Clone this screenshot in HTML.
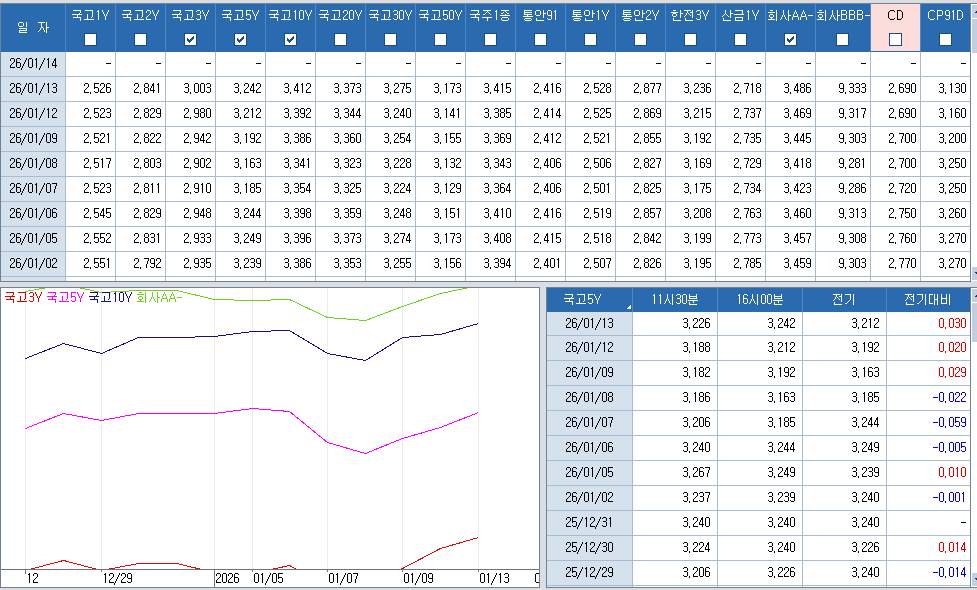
<!DOCTYPE html>
<html><head><meta charset="utf-8"><style>
html,body{margin:0;padding:0;}
body{width:977px;height:590px;position:relative;overflow:hidden;background:#dcdde1;font-family:"Liberation Sans",sans-serif;}
#r>div{position:absolute;}
.cb{position:absolute;width:11px;height:11px;border:1px solid #1c4a80;background:#fff;}
.ck{position:absolute;}
.lg{position:absolute;font-size:12px;line-height:14px;white-space:nowrap;}
.hg{position:absolute;font-size:12px;line-height:20px;white-space:nowrap;}
.h{position:absolute;width:120px;text-align:center;font-size:12px;line-height:14px;white-space:nowrap;}
#t{position:absolute;left:0;top:0;}
</style></head><body>
<div id="r">
<div style="left:0px;top:3px;width:977px;height:1px;background:#6f8398;"></div><div style="left:0px;top:3px;width:1px;height:279px;background:#6f8398;"></div><div style="left:0px;top:281px;width:971px;height:1px;background:#6f8398;"></div><div style="left:1px;top:4px;width:970px;height:48px;background:#2a6aae;"></div><div style="left:871px;top:4px;width:49px;height:47px;background:#fddcdc;"></div><div style="left:65px;top:4px;width:1px;height:48px;background:#5186c0;"></div><div style="left:115px;top:4px;width:1px;height:48px;background:#5186c0;"></div><div style="left:165px;top:4px;width:1px;height:48px;background:#5186c0;"></div><div style="left:215px;top:4px;width:1px;height:48px;background:#5186c0;"></div><div style="left:265px;top:4px;width:1px;height:48px;background:#5186c0;"></div><div style="left:315px;top:4px;width:1px;height:48px;background:#5186c0;"></div><div style="left:365px;top:4px;width:1px;height:48px;background:#5186c0;"></div><div style="left:415px;top:4px;width:1px;height:48px;background:#5186c0;"></div><div style="left:465px;top:4px;width:1px;height:48px;background:#5186c0;"></div><div style="left:515px;top:4px;width:1px;height:48px;background:#5186c0;"></div><div style="left:565px;top:4px;width:1px;height:48px;background:#5186c0;"></div><div style="left:615px;top:4px;width:1px;height:48px;background:#5186c0;"></div><div style="left:665px;top:4px;width:1px;height:48px;background:#5186c0;"></div><div style="left:715px;top:4px;width:1px;height:48px;background:#5186c0;"></div><div style="left:765px;top:4px;width:1px;height:48px;background:#5186c0;"></div><div style="left:815px;top:4px;width:1px;height:48px;background:#5186c0;"></div><div style="left:870px;top:4px;width:1px;height:48px;background:#5186c0;"></div><div style="left:920px;top:4px;width:1px;height:48px;background:#5186c0;"></div><div style="left:970px;top:4px;width:1px;height:278px;background:#6f8398;"></div><div style="left:1px;top:52px;width:64px;height:229px;background:#d5e1ec;"></div><div style="left:66px;top:52px;width:904px;height:229px;background:#ffffff;"></div><div style="left:1px;top:76px;width:969px;height:1px;background:#a8bcd0;"></div><div style="left:1px;top:101px;width:969px;height:1px;background:#a8bcd0;"></div><div style="left:1px;top:126px;width:969px;height:1px;background:#a8bcd0;"></div><div style="left:1px;top:151px;width:969px;height:1px;background:#a8bcd0;"></div><div style="left:1px;top:176px;width:969px;height:1px;background:#a8bcd0;"></div><div style="left:1px;top:201px;width:969px;height:1px;background:#a8bcd0;"></div><div style="left:1px;top:226px;width:969px;height:1px;background:#a8bcd0;"></div><div style="left:1px;top:251px;width:969px;height:1px;background:#a8bcd0;"></div><div style="left:1px;top:276px;width:969px;height:1px;background:#a8bcd0;"></div><div style="left:65px;top:52px;width:1px;height:229px;background:#a8bcd0;"></div><div style="left:115px;top:52px;width:1px;height:229px;background:#a8bcd0;"></div><div style="left:165px;top:52px;width:1px;height:229px;background:#a8bcd0;"></div><div style="left:215px;top:52px;width:1px;height:229px;background:#a8bcd0;"></div><div style="left:265px;top:52px;width:1px;height:229px;background:#a8bcd0;"></div><div style="left:315px;top:52px;width:1px;height:229px;background:#a8bcd0;"></div><div style="left:365px;top:52px;width:1px;height:229px;background:#a8bcd0;"></div><div style="left:415px;top:52px;width:1px;height:229px;background:#a8bcd0;"></div><div style="left:465px;top:52px;width:1px;height:229px;background:#a8bcd0;"></div><div style="left:515px;top:52px;width:1px;height:229px;background:#a8bcd0;"></div><div style="left:565px;top:52px;width:1px;height:229px;background:#a8bcd0;"></div><div style="left:615px;top:52px;width:1px;height:229px;background:#a8bcd0;"></div><div style="left:665px;top:52px;width:1px;height:229px;background:#a8bcd0;"></div><div style="left:715px;top:52px;width:1px;height:229px;background:#a8bcd0;"></div><div style="left:765px;top:52px;width:1px;height:229px;background:#a8bcd0;"></div><div style="left:815px;top:52px;width:1px;height:229px;background:#a8bcd0;"></div><div style="left:870px;top:52px;width:1px;height:229px;background:#a8bcd0;"></div><div style="left:920px;top:52px;width:1px;height:229px;background:#a8bcd0;"></div><div class="cb" style="left:84px;top:33px"></div><div class="cb" style="left:134px;top:33px"></div><div class="cb" style="left:184px;top:33px"></div><div style="left:187px;top:38px;width:1px;height:3px;background:#1c4a80;"></div><div style="left:188px;top:39px;width:1px;height:3px;background:#1c4a80;"></div><div style="left:189px;top:40px;width:1px;height:3px;background:#1c4a80;"></div><div style="left:190px;top:39px;width:1px;height:3px;background:#1c4a80;"></div><div style="left:191px;top:38px;width:1px;height:3px;background:#1c4a80;"></div><div style="left:192px;top:37px;width:1px;height:3px;background:#1c4a80;"></div><div style="left:193px;top:36px;width:1px;height:3px;background:#1c4a80;"></div><div class="cb" style="left:234px;top:33px"></div><div style="left:237px;top:38px;width:1px;height:3px;background:#1c4a80;"></div><div style="left:238px;top:39px;width:1px;height:3px;background:#1c4a80;"></div><div style="left:239px;top:40px;width:1px;height:3px;background:#1c4a80;"></div><div style="left:240px;top:39px;width:1px;height:3px;background:#1c4a80;"></div><div style="left:241px;top:38px;width:1px;height:3px;background:#1c4a80;"></div><div style="left:242px;top:37px;width:1px;height:3px;background:#1c4a80;"></div><div style="left:243px;top:36px;width:1px;height:3px;background:#1c4a80;"></div><div class="cb" style="left:284px;top:33px"></div><div style="left:287px;top:38px;width:1px;height:3px;background:#1c4a80;"></div><div style="left:288px;top:39px;width:1px;height:3px;background:#1c4a80;"></div><div style="left:289px;top:40px;width:1px;height:3px;background:#1c4a80;"></div><div style="left:290px;top:39px;width:1px;height:3px;background:#1c4a80;"></div><div style="left:291px;top:38px;width:1px;height:3px;background:#1c4a80;"></div><div style="left:292px;top:37px;width:1px;height:3px;background:#1c4a80;"></div><div style="left:293px;top:36px;width:1px;height:3px;background:#1c4a80;"></div><div class="cb" style="left:334px;top:33px"></div><div class="cb" style="left:384px;top:33px"></div><div class="cb" style="left:434px;top:33px"></div><div class="cb" style="left:484px;top:33px"></div><div class="cb" style="left:534px;top:33px"></div><div class="cb" style="left:584px;top:33px"></div><div class="cb" style="left:634px;top:33px"></div><div class="cb" style="left:684px;top:33px"></div><div class="cb" style="left:734px;top:33px"></div><div class="cb" style="left:784px;top:33px"></div><div style="left:787px;top:38px;width:1px;height:3px;background:#1c4a80;"></div><div style="left:788px;top:39px;width:1px;height:3px;background:#1c4a80;"></div><div style="left:789px;top:40px;width:1px;height:3px;background:#1c4a80;"></div><div style="left:790px;top:39px;width:1px;height:3px;background:#1c4a80;"></div><div style="left:791px;top:38px;width:1px;height:3px;background:#1c4a80;"></div><div style="left:792px;top:37px;width:1px;height:3px;background:#1c4a80;"></div><div style="left:793px;top:36px;width:1px;height:3px;background:#1c4a80;"></div><div class="cb" style="left:836px;top:33px"></div><div class="cb" style="left:889px;top:33px"></div><div class="cb" style="left:939px;top:33px"></div><div style="left:971px;top:4px;width:6px;height:277px;background:#ffffff;"></div><div style="left:972px;top:5px;width:5px;height:13px;background:#c3cfdc;"></div><div style="left:972px;top:19px;width:5px;height:34px;background:#c3cfdc;"></div><div style="left:972px;top:267px;width:5px;height:13px;background:#c3cfdc;"></div><div style="left:0px;top:287px;width:540px;height:301px;background:#6f8398;"></div><div style="left:1px;top:288px;width:538px;height:299px;background:#ffffff;"></div><div style="left:546px;top:287px;width:431px;height:301px;background:#6f8398;"></div><div style="left:547px;top:288px;width:423px;height:24px;background:#2a6aae;"></div><div style="left:547px;top:312px;width:85px;height:275px;background:#d5e1ec;"></div><div style="left:633px;top:312px;width:337px;height:275px;background:#ffffff;"></div><div style="left:632px;top:288px;width:1px;height:24px;background:#5186c0;"></div><div style="left:632px;top:312px;width:1px;height:275px;background:#a8bcd0;"></div><div style="left:717px;top:288px;width:1px;height:24px;background:#5186c0;"></div><div style="left:717px;top:312px;width:1px;height:275px;background:#a8bcd0;"></div><div style="left:802px;top:288px;width:1px;height:24px;background:#5186c0;"></div><div style="left:802px;top:312px;width:1px;height:275px;background:#a8bcd0;"></div><div style="left:886px;top:288px;width:1px;height:24px;background:#5186c0;"></div><div style="left:886px;top:312px;width:1px;height:275px;background:#a8bcd0;"></div><div style="left:547px;top:335px;width:423px;height:1px;background:#a8bcd0;"></div><div style="left:547px;top:360px;width:423px;height:1px;background:#a8bcd0;"></div><div style="left:547px;top:385px;width:423px;height:1px;background:#a8bcd0;"></div><div style="left:547px;top:410px;width:423px;height:1px;background:#a8bcd0;"></div><div style="left:547px;top:435px;width:423px;height:1px;background:#a8bcd0;"></div><div style="left:547px;top:460px;width:423px;height:1px;background:#a8bcd0;"></div><div style="left:547px;top:485px;width:423px;height:1px;background:#a8bcd0;"></div><div style="left:547px;top:510px;width:423px;height:1px;background:#a8bcd0;"></div><div style="left:547px;top:535px;width:423px;height:1px;background:#a8bcd0;"></div><div style="left:547px;top:560px;width:423px;height:1px;background:#a8bcd0;"></div><div style="left:547px;top:585px;width:423px;height:1px;background:#a8bcd0;"></div><div style="left:630px;top:305px;width:1px;height:1px;background:#ffffff;"></div><div style="left:629px;top:306px;width:2px;height:1px;background:#ffffff;"></div><div style="left:628px;top:307px;width:3px;height:1px;background:#ffffff;"></div><div style="left:627px;top:308px;width:4px;height:1px;background:#ffffff;"></div><div style="left:971px;top:288px;width:6px;height:299px;background:#ffffff;"></div><div style="left:972px;top:289px;width:5px;height:13px;background:#c3cfdc;"></div><div style="left:972px;top:303px;width:5px;height:39px;background:#c3cfdc;"></div><div style="left:972px;top:573px;width:5px;height:13px;background:#c3cfdc;"></div><div style="left:976px;top:11px;width:2px;height:1px;background:#26375a;"></div><div style="left:975px;top:12px;width:3px;height:1px;background:#26375a;"></div><div style="left:975px;top:272px;width:3px;height:1px;background:#26375a;"></div><div style="left:976px;top:273px;width:2px;height:1px;background:#26375a;"></div><div style="left:976px;top:295px;width:2px;height:1px;background:#26375a;"></div><div style="left:975px;top:296px;width:3px;height:1px;background:#26375a;"></div><div style="left:975px;top:578px;width:3px;height:1px;background:#26375a;"></div><div style="left:976px;top:579px;width:2px;height:1px;background:#26375a;"></div>
</div>
<svg id="t" width="977" height="590" viewBox="0 0 977 590" shape-rendering="crispEdges"><defs><path id="h0" d="M1 0h8v1h-8zM8 1h1v1h-1zM8 2h1v1h-1zM7 3h1v1h-1zM0 4h10v1h-10zM5 5h1v1h-1zM5 6h1v1h-1zM1 7h8v1h-8zM8 8h1v1h-1zM8 9h1v1h-1zM8 10h1v1h-1z"/><path id="h1" d="M1 0h8v1h-8zM8 1h1v1h-1zM8 2h1v1h-1zM8 3h1v1h-1zM3 4h1v1h-1zM8 4h1v1h-1zM3 5h1v1h-1zM8 5h1v1h-1zM3 6h1v1h-1zM8 6h1v1h-1zM3 7h1v1h-1zM7 7h1v1h-1zM3 8h1v1h-1zM0 9h10v1h-10z"/><path id="h2" d="M1 0h8v1h-8zM5 1h1v1h-1zM4 2h1v1h-1zM6 2h1v1h-1zM3 3h1v1h-1zM7 3h1v1h-1zM1 4h2v1h-2zM8 4h1v1h-1zM0 7h10v1h-10zM5 8h1v1h-1zM5 9h1v1h-1zM5 10h1v1h-1z"/><path id="h3" d="M1 0h8v1h-8zM5 1h1v1h-1zM3 2h1v1h-1zM6 2h1v1h-1zM1 3h2v1h-2zM7 3h2v1h-2zM5 4h1v1h-1zM0 5h10v1h-10zM2 7h6v1h-6zM1 8h1v1h-1zM8 8h1v1h-1zM1 9h1v1h-1zM8 9h1v1h-1zM2 10h6v1h-6z"/><path id="h4" d="M1 0h8v1h-8zM1 1h1v1h-1zM1 2h8v1h-8zM1 3h1v1h-1zM1 4h8v1h-8zM4 5h1v1h-1zM0 6h10v1h-10zM2 8h6v1h-6zM1 9h1v1h-1zM8 9h1v1h-1zM2 10h6v1h-6z"/><path id="h5" d="M1 0h4v1h-4zM8 0h1v1h-1zM0 1h1v1h-1zM5 1h1v1h-1zM8 1h1v1h-1zM0 2h1v1h-1zM5 2h1v1h-1zM8 2h1v1h-1zM0 3h1v1h-1zM5 3h1v1h-1zM8 3h3v1h-3zM0 4h1v1h-1zM5 4h1v1h-1zM8 4h1v1h-1zM1 5h4v1h-4zM8 5h1v1h-1zM8 6h1v1h-1zM8 7h1v1h-1zM1 8h1v1h-1zM1 9h1v1h-1zM1 10h8v1h-8z"/><path id="h6" d="M1 0h3v1h-3zM8 0h1v1h-1zM8 1h1v1h-1zM-1 2h7v1h-7zM8 2h1v1h-1zM1 3h3v1h-3zM8 3h3v1h-3zM0 4h1v1h-1zM4 4h1v1h-1zM8 4h1v1h-1zM0 5h1v1h-1zM4 5h1v1h-1zM8 5h1v1h-1zM1 6h3v1h-3zM8 6h1v1h-1zM8 7h1v1h-1zM1 8h1v1h-1zM1 9h1v1h-1zM1 10h8v1h-8z"/><path id="h7" d="M0 0h7v1h-7zM8 0h1v1h-1zM3 1h1v1h-1zM8 1h1v1h-1zM3 2h1v1h-1zM6 2h3v1h-3zM2 3h1v1h-1zM4 3h1v1h-1zM8 3h1v1h-1zM2 4h1v1h-1zM5 4h1v1h-1zM8 4h1v1h-1zM1 5h1v1h-1zM6 5h1v1h-1zM8 5h1v1h-1zM0 6h1v1h-1zM8 6h1v1h-1zM8 7h1v1h-1zM1 8h1v1h-1zM1 9h1v1h-1zM1 10h8v1h-8z"/><path id="h8" d="M3 0h1v1h-1zM8 0h1v1h-1zM3 1h1v1h-1zM8 1h1v1h-1zM3 2h1v1h-1zM8 2h1v1h-1zM3 3h1v1h-1zM8 3h3v1h-3zM2 4h1v1h-1zM4 4h1v1h-1zM8 4h1v1h-1zM1 5h1v1h-1zM5 5h1v1h-1zM8 5h1v1h-1zM0 6h1v1h-1zM6 6h1v1h-1zM8 6h1v1h-1zM8 7h1v1h-1zM1 8h1v1h-1zM1 9h1v1h-1zM1 10h8v1h-8z"/><path id="h9" d="M1 0h8v1h-8zM8 1h1v1h-1zM8 2h1v1h-1zM8 3h1v1h-1zM0 4h10v1h-10zM1 7h8v1h-8zM1 8h1v1h-1zM8 8h1v1h-1zM1 9h1v1h-1zM8 9h1v1h-1zM1 10h8v1h-8z"/><path id="h10" d="M2 0h3v1h-3zM8 0h1v1h-1zM8 1h1v1h-1zM0 2h7v1h-7zM8 2h1v1h-1zM8 3h1v1h-1zM2 4h3v1h-3zM8 4h1v1h-1zM1 5h1v1h-1zM5 5h1v1h-1zM8 5h1v1h-1zM1 6h1v1h-1zM5 6h1v1h-1zM8 6h1v1h-1zM2 7h3v1h-3zM8 7h1v1h-1zM3 8h1v1h-1zM8 8h1v1h-1zM0 9h7v1h-7zM8 9h1v1h-1zM8 10h1v1h-1z"/><path id="h11" d="M3 0h1v1h-1zM8 0h1v1h-1zM3 1h1v1h-1zM8 1h1v1h-1zM3 2h1v1h-1zM8 2h1v1h-1zM3 3h1v1h-1zM8 3h1v1h-1zM3 4h1v1h-1zM8 4h1v1h-1zM2 5h1v1h-1zM4 5h1v1h-1zM8 5h3v1h-3zM2 6h1v1h-1zM4 6h1v1h-1zM8 6h1v1h-1zM1 7h1v1h-1zM5 7h1v1h-1zM8 7h1v1h-1zM1 8h1v1h-1zM5 8h1v1h-1zM8 8h1v1h-1zM0 9h1v1h-1zM6 9h1v1h-1zM8 9h1v1h-1zM8 10h1v1h-1z"/><path id="h12" d="M4 0h1v1h-1zM9 0h1v1h-1zM4 1h1v1h-1zM9 1h1v1h-1zM4 2h1v1h-1zM9 2h1v1h-1zM4 3h1v1h-1zM9 3h1v1h-1zM4 4h1v1h-1zM9 4h1v1h-1zM3 5h1v1h-1zM5 5h1v1h-1zM9 5h1v1h-1zM3 6h1v1h-1zM5 6h1v1h-1zM9 6h1v1h-1zM2 7h1v1h-1zM6 7h1v1h-1zM9 7h1v1h-1zM2 8h1v1h-1zM6 8h1v1h-1zM9 8h1v1h-1zM1 9h1v1h-1zM7 9h1v1h-1zM9 9h1v1h-1zM9 10h1v1h-1z"/><path id="h13" d="M2 0h1v1h-1zM9 0h1v1h-1zM2 1h1v1h-1zM9 1h1v1h-1zM2 2h8v1h-8zM2 3h1v1h-1zM9 3h1v1h-1zM2 4h8v1h-8zM1 6h10v1h-10zM6 7h1v1h-1zM2 8h1v1h-1zM6 8h1v1h-1zM2 9h1v1h-1zM2 10h8v1h-8z"/><path id="h14" d="M0 0h6v1h-6zM8 0h1v1h-1zM5 1h1v1h-1zM8 1h1v1h-1zM5 2h1v1h-1zM8 2h1v1h-1zM5 3h1v1h-1zM8 3h1v1h-1zM5 4h1v1h-1zM8 4h1v1h-1zM5 5h1v1h-1zM8 5h1v1h-1zM4 6h1v1h-1zM8 6h1v1h-1zM3 7h1v1h-1zM8 7h1v1h-1zM2 8h1v1h-1zM8 8h1v1h-1zM0 9h2v1h-2zM8 9h1v1h-1zM8 10h1v1h-1z"/><path id="h15" d="M0 0h4v1h-4zM5 0h1v1h-1zM8 0h1v1h-1zM0 1h1v1h-1zM5 1h1v1h-1zM8 1h1v1h-1zM0 2h1v1h-1zM5 2h1v1h-1zM8 2h1v1h-1zM0 3h1v1h-1zM5 3h1v1h-1zM8 3h1v1h-1zM0 4h1v1h-1zM5 4h1v1h-1zM8 4h1v1h-1zM0 5h1v1h-1zM5 5h4v1h-4zM0 6h1v1h-1zM5 6h1v1h-1zM8 6h1v1h-1zM0 7h1v1h-1zM5 7h1v1h-1zM8 7h1v1h-1zM0 8h1v1h-1zM5 8h1v1h-1zM8 8h1v1h-1zM0 9h4v1h-4zM5 9h1v1h-1zM8 9h1v1h-1zM5 10h1v1h-1zM8 10h1v1h-1z"/><path id="h16" d="M0 0h1v1h-1zM5 0h1v1h-1zM8 0h1v1h-1zM0 1h1v1h-1zM5 1h1v1h-1zM8 1h1v1h-1zM0 2h1v1h-1zM5 2h1v1h-1zM8 2h1v1h-1zM0 3h1v1h-1zM5 3h1v1h-1zM8 3h1v1h-1zM0 4h6v1h-6zM8 4h1v1h-1zM0 5h1v1h-1zM5 5h1v1h-1zM8 5h1v1h-1zM0 6h1v1h-1zM5 6h1v1h-1zM8 6h1v1h-1zM0 7h1v1h-1zM5 7h1v1h-1zM8 7h1v1h-1zM0 8h1v1h-1zM5 8h1v1h-1zM8 8h1v1h-1zM0 9h6v1h-6zM8 9h1v1h-1zM8 10h1v1h-1z"/><path id="h17" d="M1 0h4v1h-4zM8 0h1v1h-1zM0 1h1v1h-1zM5 1h1v1h-1zM8 1h1v1h-1zM0 2h1v1h-1zM5 2h1v1h-1zM8 2h1v1h-1zM0 3h1v1h-1zM5 3h1v1h-1zM8 3h1v1h-1zM1 4h4v1h-4zM8 4h1v1h-1zM1 6h8v1h-8zM8 7h1v1h-1zM1 8h8v1h-8zM1 9h1v1h-1zM1 10h8v1h-8z"/><path id="h18" d="M0 0h7v1h-7zM8 0h1v1h-1zM3 1h1v1h-1zM8 1h1v1h-1zM3 2h1v1h-1zM8 2h1v1h-1zM3 3h1v1h-1zM8 3h1v1h-1zM3 4h1v1h-1zM8 4h1v1h-1zM3 5h2v1h-2zM8 5h3v1h-3zM2 6h1v1h-1zM5 6h1v1h-1zM8 6h1v1h-1zM2 7h1v1h-1zM5 7h1v1h-1zM8 7h1v1h-1zM1 8h1v1h-1zM6 8h1v1h-1zM8 8h1v1h-1zM0 9h1v1h-1zM6 9h1v1h-1zM8 9h1v1h-1zM8 10h1v1h-1z"/><path id="gA" d="M3 0h1v1h-1zM3 1h1v1h-1zM2 2h1v1h-1zM4 2h1v1h-1zM2 3h1v1h-1zM4 3h1v1h-1zM1 4h1v1h-1zM5 4h1v1h-1zM1 5h1v1h-1zM5 5h1v1h-1zM1 6h5v1h-5zM0 7h1v1h-1zM6 7h1v1h-1zM0 8h1v1h-1zM6 8h1v1h-1zM0 9h1v1h-1zM6 9h1v1h-1z"/><path id="gB" d="M0 0h5v1h-5zM0 1h1v1h-1zM5 1h1v1h-1zM0 2h1v1h-1zM5 2h1v1h-1zM0 3h1v1h-1zM5 3h1v1h-1zM0 4h5v1h-5zM0 5h1v1h-1zM5 5h1v1h-1zM0 6h1v1h-1zM5 6h1v1h-1zM0 7h1v1h-1zM5 7h1v1h-1zM0 8h1v1h-1zM5 8h1v1h-1zM0 9h5v1h-5z"/><path id="gC" d="M3 0h4v1h-4zM2 1h1v1h-1zM7 1h1v1h-1zM1 2h1v1h-1zM1 3h1v1h-1zM1 4h1v1h-1zM1 5h1v1h-1zM1 6h1v1h-1zM1 7h1v1h-1zM2 8h1v1h-1zM7 8h1v1h-1zM3 9h4v1h-4z"/><path id="gD" d="M0 0h4v1h-4zM0 1h1v1h-1zM4 1h1v1h-1zM0 2h1v1h-1zM5 2h1v1h-1zM0 3h1v1h-1zM5 3h1v1h-1zM0 4h1v1h-1zM5 4h1v1h-1zM0 5h1v1h-1zM5 5h1v1h-1zM0 6h1v1h-1zM5 6h1v1h-1zM0 7h1v1h-1zM5 7h1v1h-1zM0 8h1v1h-1zM4 8h1v1h-1zM0 9h4v1h-4z"/><path id="gP" d="M0 0h5v1h-5zM0 1h1v1h-1zM5 1h1v1h-1zM0 2h1v1h-1zM5 2h1v1h-1zM0 3h1v1h-1zM5 3h1v1h-1zM0 4h1v1h-1zM5 4h1v1h-1zM0 5h5v1h-5zM0 6h1v1h-1zM0 7h1v1h-1zM0 8h1v1h-1zM0 9h1v1h-1z"/><path id="gY" d="M0 0h1v1h-1zM6 0h1v1h-1zM0 1h1v1h-1zM6 1h1v1h-1zM1 2h1v1h-1zM5 2h1v1h-1zM1 3h1v1h-1zM5 3h1v1h-1zM2 4h1v1h-1zM4 4h1v1h-1zM2 5h1v1h-1zM4 5h1v1h-1zM3 6h1v1h-1zM3 7h1v1h-1zM3 8h1v1h-1zM3 9h1v1h-1z"/><path id="g0" d="M1 0h3v1h-3zM0 1h1v1h-1zM4 1h1v1h-1zM0 2h1v1h-1zM4 2h1v1h-1zM0 3h1v1h-1zM4 3h1v1h-1zM0 4h1v1h-1zM4 4h1v1h-1zM0 5h1v1h-1zM4 5h1v1h-1zM0 6h1v1h-1zM4 6h1v1h-1zM0 7h1v1h-1zM4 7h1v1h-1zM0 8h1v1h-1zM4 8h1v1h-1zM1 9h3v1h-3z"/><path id="g1" d="M2 0h1v1h-1zM1 1h2v1h-2zM2 2h1v1h-1zM2 3h1v1h-1zM2 4h1v1h-1zM2 5h1v1h-1zM2 6h1v1h-1zM2 7h1v1h-1zM2 8h1v1h-1zM2 9h1v1h-1z"/><path id="g2" d="M1 0h3v1h-3zM0 1h1v1h-1zM4 1h1v1h-1zM0 2h1v1h-1zM4 2h1v1h-1zM4 3h1v1h-1zM3 4h1v1h-1zM2 5h1v1h-1zM1 6h1v1h-1zM0 7h1v1h-1zM0 8h1v1h-1zM0 9h5v1h-5z"/><path id="g3" d="M1 0h3v1h-3zM0 1h1v1h-1zM4 1h1v1h-1zM4 2h1v1h-1zM4 3h1v1h-1zM1 4h3v1h-3zM4 5h1v1h-1zM4 6h1v1h-1zM4 7h1v1h-1zM0 8h1v1h-1zM4 8h1v1h-1zM1 9h3v1h-3z"/><path id="g4" d="M3 0h1v1h-1zM2 1h2v1h-2zM2 2h2v1h-2zM1 3h1v1h-1zM3 3h1v1h-1zM1 4h1v1h-1zM3 4h1v1h-1zM0 5h1v1h-1zM3 5h1v1h-1zM0 6h1v1h-1zM3 6h1v1h-1zM0 7h5v1h-5zM3 8h1v1h-1zM3 9h1v1h-1z"/><path id="g5" d="M0 0h5v1h-5zM0 1h1v1h-1zM0 2h1v1h-1zM0 3h1v1h-1zM0 4h4v1h-4zM0 5h1v1h-1zM4 5h1v1h-1zM4 6h1v1h-1zM4 7h1v1h-1zM0 8h1v1h-1zM4 8h1v1h-1zM1 9h3v1h-3z"/><path id="g6" d="M1 0h3v1h-3zM0 1h1v1h-1zM4 1h1v1h-1zM0 2h1v1h-1zM0 3h1v1h-1zM0 4h4v1h-4zM0 5h1v1h-1zM4 5h1v1h-1zM0 6h1v1h-1zM4 6h1v1h-1zM0 7h1v1h-1zM4 7h1v1h-1zM0 8h1v1h-1zM4 8h1v1h-1zM1 9h3v1h-3z"/><path id="g7" d="M0 0h5v1h-5zM4 1h1v1h-1zM4 2h1v1h-1zM3 3h1v1h-1zM3 4h1v1h-1zM3 5h1v1h-1zM2 6h1v1h-1zM2 7h1v1h-1zM2 8h1v1h-1zM2 9h1v1h-1z"/><path id="g8" d="M1 0h3v1h-3zM0 1h1v1h-1zM4 1h1v1h-1zM0 2h1v1h-1zM4 2h1v1h-1zM0 3h1v1h-1zM4 3h1v1h-1zM1 4h3v1h-3zM0 5h1v1h-1zM4 5h1v1h-1zM0 6h1v1h-1zM4 6h1v1h-1zM0 7h1v1h-1zM4 7h1v1h-1zM0 8h1v1h-1zM4 8h1v1h-1zM1 9h3v1h-3z"/><path id="g9" d="M1 0h3v1h-3zM0 1h1v1h-1zM4 1h1v1h-1zM0 2h1v1h-1zM4 2h1v1h-1zM0 3h1v1h-1zM4 3h1v1h-1zM0 4h1v1h-1zM4 4h1v1h-1zM1 5h4v1h-4zM4 6h1v1h-1zM4 7h1v1h-1zM0 8h1v1h-1zM4 8h1v1h-1zM1 9h3v1h-3z"/><path id="gc" d="M0 9h1v1h-1zM0 10h1v1h-1z"/><path id="gm" d="M0 5h5v1h-5z"/><path id="gs" d="M4 0h1v1h-1zM4 1h1v1h-1zM3 2h1v1h-1zM3 3h1v1h-1zM2 4h1v1h-1zM2 5h1v1h-1zM1 6h1v1h-1zM1 7h1v1h-1zM0 8h1v1h-1zM0 9h1v1h-1zM-1 10h1v1h-1zM-1 11h1v1h-1z"/><clipPath id="pc"><rect x="1" y="288" width="538" height="281"/></clipPath><clipPath id="cc"><rect x="0" y="0" width="539" height="590"/></clipPath></defs><rect x="25" y="288" width="1" height="281" fill="#ececec"/><rect x="101" y="288" width="1" height="281" fill="#ececec"/><rect x="214" y="288" width="1" height="281" fill="#ececec"/><rect x="252" y="288" width="1" height="281" fill="#ececec"/><rect x="327" y="288" width="1" height="281" fill="#ececec"/><rect x="402" y="288" width="1" height="281" fill="#ececec"/><rect x="478" y="288" width="1" height="281" fill="#ececec"/><g clip-path="url(#pc)"><polyline points="25.5,428.5 63.5,413.5 101.5,420.5 138.5,413.5 176.5,413.5 214.5,413.5 252.5,408.5 289.5,411.5 327.5,442.5 365.5,453.5 402.5,438.5 440.5,427.5 478.5,412.5" fill="none" stroke="#ff00ff" stroke-width="1"/><polyline points="25.5,358.5 63.5,343.5 101.5,353.5 138.5,337.5 176.5,337.5 214.5,336.5 252.5,331.5 289.5,330.5 327.5,353.5 365.5,360.5 402.5,337.5 440.5,334.5 478.5,323.5" fill="none" stroke="#10107e" stroke-width="1"/><polyline points="25.5,291.5 63.5,284.5 101.5,292.5 138.5,290.5 176.5,290.5 214.5,299.5 252.5,300.5 289.5,299.5 327.5,317.5 365.5,320.5 402.5,306.5 440.5,293.5 478.5,285.5" fill="none" stroke="#6ed21e" stroke-width="1"/><polyline points="25.5,570.5 63.5,560.5 101.5,570.5 138.5,563.5 176.5,563.5 214.5,572.5 252.5,573.5 289.5,565.5 327.5,585.5 365.5,589.5 402.5,568.5 440.5,548.5 478.5,537.5" fill="none" stroke="#dc0a0a" stroke-width="1"/></g><rect x="1" y="569" width="538" height="1" fill="#707274"/><rect x="214" y="569" width="1" height="18" fill="#707274"/><rect x="25" y="570" width="1" height="4" fill="#707274"/><rect x="101" y="570" width="1" height="2" fill="#707274"/><rect x="252" y="570" width="1" height="2" fill="#707274"/><rect x="327" y="570" width="1" height="2" fill="#707274"/><rect x="402" y="570" width="1" height="2" fill="#707274"/><rect x="478" y="570" width="1" height="2" fill="#707274"/><use href="#h17" x="18" y="22" fill="#fff"/><use href="#h18" x="38" y="22" fill="#fff"/><use href="#h0" x="72" y="10" fill="#fff"/><use href="#h1" x="84" y="10" fill="#fff"/><use href="#g1" x="96" y="10" fill="#fff"/><use href="#gY" x="102" y="10" fill="#fff"/><use href="#h0" x="122" y="10" fill="#fff"/><use href="#h1" x="134" y="10" fill="#fff"/><use href="#g2" x="146" y="10" fill="#fff"/><use href="#gY" x="152" y="10" fill="#fff"/><use href="#h0" x="172" y="10" fill="#fff"/><use href="#h1" x="184" y="10" fill="#fff"/><use href="#g3" x="196" y="10" fill="#fff"/><use href="#gY" x="202" y="10" fill="#fff"/><use href="#h0" x="222" y="10" fill="#fff"/><use href="#h1" x="234" y="10" fill="#fff"/><use href="#g5" x="246" y="10" fill="#fff"/><use href="#gY" x="252" y="10" fill="#fff"/><use href="#h0" x="269" y="10" fill="#fff"/><use href="#h1" x="281" y="10" fill="#fff"/><use href="#g1" x="293" y="10" fill="#fff"/><use href="#g0" x="299" y="10" fill="#fff"/><use href="#gY" x="305" y="10" fill="#fff"/><use href="#h0" x="319" y="10" fill="#fff"/><use href="#h1" x="331" y="10" fill="#fff"/><use href="#g2" x="343" y="10" fill="#fff"/><use href="#g0" x="349" y="10" fill="#fff"/><use href="#gY" x="355" y="10" fill="#fff"/><use href="#h0" x="369" y="10" fill="#fff"/><use href="#h1" x="381" y="10" fill="#fff"/><use href="#g3" x="393" y="10" fill="#fff"/><use href="#g0" x="399" y="10" fill="#fff"/><use href="#gY" x="405" y="10" fill="#fff"/><use href="#h0" x="419" y="10" fill="#fff"/><use href="#h1" x="431" y="10" fill="#fff"/><use href="#g5" x="443" y="10" fill="#fff"/><use href="#g0" x="449" y="10" fill="#fff"/><use href="#gY" x="455" y="10" fill="#fff"/><use href="#h0" x="470" y="10" fill="#fff"/><use href="#h2" x="482" y="10" fill="#fff"/><use href="#g1" x="494" y="10" fill="#fff"/><use href="#h3" x="500" y="10" fill="#fff"/><use href="#h4" x="523" y="10" fill="#fff"/><use href="#h5" x="535" y="10" fill="#fff"/><use href="#g9" x="547" y="10" fill="#fff"/><use href="#g1" x="553" y="10" fill="#fff"/><use href="#h4" x="572" y="10" fill="#fff"/><use href="#h5" x="584" y="10" fill="#fff"/><use href="#g1" x="596" y="10" fill="#fff"/><use href="#gY" x="602" y="10" fill="#fff"/><use href="#h4" x="622" y="10" fill="#fff"/><use href="#h5" x="634" y="10" fill="#fff"/><use href="#g2" x="646" y="10" fill="#fff"/><use href="#gY" x="652" y="10" fill="#fff"/><use href="#h6" x="672" y="10" fill="#fff"/><use href="#h7" x="684" y="10" fill="#fff"/><use href="#g3" x="696" y="10" fill="#fff"/><use href="#gY" x="702" y="10" fill="#fff"/><use href="#h8" x="722" y="10" fill="#fff"/><use href="#h9" x="734" y="10" fill="#fff"/><use href="#g1" x="746" y="10" fill="#fff"/><use href="#gY" x="752" y="10" fill="#fff"/><use href="#h10" x="768" y="10" fill="#fff"/><use href="#h11" x="780" y="10" fill="#fff"/><use href="#gA" x="792" y="10" fill="#fff"/><use href="#gA" x="800" y="10" fill="#fff"/><use href="#gm" x="808" y="10" fill="#fff"/><use href="#h10" x="817" y="10" fill="#fff"/><use href="#h11" x="829" y="10" fill="#fff"/><use href="#gB" x="841" y="10" fill="#fff"/><use href="#gB" x="849" y="10" fill="#fff"/><use href="#gB" x="857" y="10" fill="#fff"/><use href="#gm" x="865" y="10" fill="#fff"/><use href="#gC" x="887" y="10" fill="#000"/><use href="#gD" x="897" y="10" fill="#000"/><use href="#gC" x="927" y="10" fill="#fff"/><use href="#gP" x="937" y="10" fill="#fff"/><use href="#g9" x="945" y="10" fill="#fff"/><use href="#g1" x="951" y="10" fill="#fff"/><use href="#gD" x="957" y="10" fill="#fff"/><use href="#g2" x="10" y="58"/><use href="#g6" x="16" y="58"/><use href="#gs" x="22" y="58"/><use href="#g0" x="28" y="58"/><use href="#g1" x="34" y="58"/><use href="#gs" x="40" y="58"/><use href="#g1" x="46" y="58"/><use href="#g4" x="52" y="58"/><use href="#gm" x="106" y="58"/><use href="#gm" x="156" y="58"/><use href="#gm" x="206" y="58"/><use href="#gm" x="256" y="58"/><use href="#gm" x="306" y="58"/><use href="#gm" x="356" y="58"/><use href="#gm" x="406" y="58"/><use href="#gm" x="456" y="58"/><use href="#gm" x="506" y="58"/><use href="#gm" x="556" y="58"/><use href="#gm" x="606" y="58"/><use href="#gm" x="656" y="58"/><use href="#gm" x="706" y="58"/><use href="#gm" x="756" y="58"/><use href="#gm" x="806" y="58"/><use href="#gm" x="861" y="58"/><use href="#gm" x="911" y="58"/><use href="#gm" x="961" y="58"/><use href="#g2" x="10" y="83"/><use href="#g6" x="16" y="83"/><use href="#gs" x="22" y="83"/><use href="#g0" x="28" y="83"/><use href="#g1" x="34" y="83"/><use href="#gs" x="40" y="83"/><use href="#g1" x="46" y="83"/><use href="#g3" x="52" y="83"/><use href="#g2" x="84" y="83"/><use href="#gc" x="90" y="83"/><use href="#g5" x="94" y="83"/><use href="#g2" x="100" y="83"/><use href="#g6" x="106" y="83"/><use href="#g2" x="134" y="83"/><use href="#gc" x="140" y="83"/><use href="#g8" x="144" y="83"/><use href="#g4" x="150" y="83"/><use href="#g1" x="156" y="83"/><use href="#g3" x="184" y="83"/><use href="#gc" x="190" y="83"/><use href="#g0" x="194" y="83"/><use href="#g0" x="200" y="83"/><use href="#g3" x="206" y="83"/><use href="#g3" x="234" y="83"/><use href="#gc" x="240" y="83"/><use href="#g2" x="244" y="83"/><use href="#g4" x="250" y="83"/><use href="#g2" x="256" y="83"/><use href="#g3" x="284" y="83"/><use href="#gc" x="290" y="83"/><use href="#g4" x="294" y="83"/><use href="#g1" x="300" y="83"/><use href="#g2" x="306" y="83"/><use href="#g3" x="334" y="83"/><use href="#gc" x="340" y="83"/><use href="#g3" x="344" y="83"/><use href="#g7" x="350" y="83"/><use href="#g3" x="356" y="83"/><use href="#g3" x="384" y="83"/><use href="#gc" x="390" y="83"/><use href="#g2" x="394" y="83"/><use href="#g7" x="400" y="83"/><use href="#g5" x="406" y="83"/><use href="#g3" x="434" y="83"/><use href="#gc" x="440" y="83"/><use href="#g1" x="444" y="83"/><use href="#g7" x="450" y="83"/><use href="#g3" x="456" y="83"/><use href="#g3" x="484" y="83"/><use href="#gc" x="490" y="83"/><use href="#g4" x="494" y="83"/><use href="#g1" x="500" y="83"/><use href="#g5" x="506" y="83"/><use href="#g2" x="534" y="83"/><use href="#gc" x="540" y="83"/><use href="#g4" x="544" y="83"/><use href="#g1" x="550" y="83"/><use href="#g6" x="556" y="83"/><use href="#g2" x="584" y="83"/><use href="#gc" x="590" y="83"/><use href="#g5" x="594" y="83"/><use href="#g2" x="600" y="83"/><use href="#g8" x="606" y="83"/><use href="#g2" x="634" y="83"/><use href="#gc" x="640" y="83"/><use href="#g8" x="644" y="83"/><use href="#g7" x="650" y="83"/><use href="#g7" x="656" y="83"/><use href="#g3" x="684" y="83"/><use href="#gc" x="690" y="83"/><use href="#g2" x="694" y="83"/><use href="#g3" x="700" y="83"/><use href="#g6" x="706" y="83"/><use href="#g2" x="734" y="83"/><use href="#gc" x="740" y="83"/><use href="#g7" x="744" y="83"/><use href="#g1" x="750" y="83"/><use href="#g8" x="756" y="83"/><use href="#g3" x="784" y="83"/><use href="#gc" x="790" y="83"/><use href="#g4" x="794" y="83"/><use href="#g8" x="800" y="83"/><use href="#g6" x="806" y="83"/><use href="#g9" x="839" y="83"/><use href="#gc" x="845" y="83"/><use href="#g3" x="849" y="83"/><use href="#g3" x="855" y="83"/><use href="#g3" x="861" y="83"/><use href="#g2" x="889" y="83"/><use href="#gc" x="895" y="83"/><use href="#g6" x="899" y="83"/><use href="#g9" x="905" y="83"/><use href="#g0" x="911" y="83"/><use href="#g3" x="939" y="83"/><use href="#gc" x="945" y="83"/><use href="#g1" x="949" y="83"/><use href="#g3" x="955" y="83"/><use href="#g0" x="961" y="83"/><use href="#g2" x="10" y="108"/><use href="#g6" x="16" y="108"/><use href="#gs" x="22" y="108"/><use href="#g0" x="28" y="108"/><use href="#g1" x="34" y="108"/><use href="#gs" x="40" y="108"/><use href="#g1" x="46" y="108"/><use href="#g2" x="52" y="108"/><use href="#g2" x="84" y="108"/><use href="#gc" x="90" y="108"/><use href="#g5" x="94" y="108"/><use href="#g2" x="100" y="108"/><use href="#g3" x="106" y="108"/><use href="#g2" x="134" y="108"/><use href="#gc" x="140" y="108"/><use href="#g8" x="144" y="108"/><use href="#g2" x="150" y="108"/><use href="#g9" x="156" y="108"/><use href="#g2" x="184" y="108"/><use href="#gc" x="190" y="108"/><use href="#g9" x="194" y="108"/><use href="#g8" x="200" y="108"/><use href="#g0" x="206" y="108"/><use href="#g3" x="234" y="108"/><use href="#gc" x="240" y="108"/><use href="#g2" x="244" y="108"/><use href="#g1" x="250" y="108"/><use href="#g2" x="256" y="108"/><use href="#g3" x="284" y="108"/><use href="#gc" x="290" y="108"/><use href="#g3" x="294" y="108"/><use href="#g9" x="300" y="108"/><use href="#g2" x="306" y="108"/><use href="#g3" x="334" y="108"/><use href="#gc" x="340" y="108"/><use href="#g3" x="344" y="108"/><use href="#g4" x="350" y="108"/><use href="#g4" x="356" y="108"/><use href="#g3" x="384" y="108"/><use href="#gc" x="390" y="108"/><use href="#g2" x="394" y="108"/><use href="#g4" x="400" y="108"/><use href="#g0" x="406" y="108"/><use href="#g3" x="434" y="108"/><use href="#gc" x="440" y="108"/><use href="#g1" x="444" y="108"/><use href="#g4" x="450" y="108"/><use href="#g1" x="456" y="108"/><use href="#g3" x="484" y="108"/><use href="#gc" x="490" y="108"/><use href="#g3" x="494" y="108"/><use href="#g8" x="500" y="108"/><use href="#g5" x="506" y="108"/><use href="#g2" x="534" y="108"/><use href="#gc" x="540" y="108"/><use href="#g4" x="544" y="108"/><use href="#g1" x="550" y="108"/><use href="#g4" x="556" y="108"/><use href="#g2" x="584" y="108"/><use href="#gc" x="590" y="108"/><use href="#g5" x="594" y="108"/><use href="#g2" x="600" y="108"/><use href="#g5" x="606" y="108"/><use href="#g2" x="634" y="108"/><use href="#gc" x="640" y="108"/><use href="#g8" x="644" y="108"/><use href="#g6" x="650" y="108"/><use href="#g9" x="656" y="108"/><use href="#g3" x="684" y="108"/><use href="#gc" x="690" y="108"/><use href="#g2" x="694" y="108"/><use href="#g1" x="700" y="108"/><use href="#g5" x="706" y="108"/><use href="#g2" x="734" y="108"/><use href="#gc" x="740" y="108"/><use href="#g7" x="744" y="108"/><use href="#g3" x="750" y="108"/><use href="#g7" x="756" y="108"/><use href="#g3" x="784" y="108"/><use href="#gc" x="790" y="108"/><use href="#g4" x="794" y="108"/><use href="#g6" x="800" y="108"/><use href="#g9" x="806" y="108"/><use href="#g9" x="839" y="108"/><use href="#gc" x="845" y="108"/><use href="#g3" x="849" y="108"/><use href="#g1" x="855" y="108"/><use href="#g7" x="861" y="108"/><use href="#g2" x="889" y="108"/><use href="#gc" x="895" y="108"/><use href="#g6" x="899" y="108"/><use href="#g9" x="905" y="108"/><use href="#g0" x="911" y="108"/><use href="#g3" x="939" y="108"/><use href="#gc" x="945" y="108"/><use href="#g1" x="949" y="108"/><use href="#g6" x="955" y="108"/><use href="#g0" x="961" y="108"/><use href="#g2" x="10" y="133"/><use href="#g6" x="16" y="133"/><use href="#gs" x="22" y="133"/><use href="#g0" x="28" y="133"/><use href="#g1" x="34" y="133"/><use href="#gs" x="40" y="133"/><use href="#g0" x="46" y="133"/><use href="#g9" x="52" y="133"/><use href="#g2" x="84" y="133"/><use href="#gc" x="90" y="133"/><use href="#g5" x="94" y="133"/><use href="#g2" x="100" y="133"/><use href="#g1" x="106" y="133"/><use href="#g2" x="134" y="133"/><use href="#gc" x="140" y="133"/><use href="#g8" x="144" y="133"/><use href="#g2" x="150" y="133"/><use href="#g2" x="156" y="133"/><use href="#g2" x="184" y="133"/><use href="#gc" x="190" y="133"/><use href="#g9" x="194" y="133"/><use href="#g4" x="200" y="133"/><use href="#g2" x="206" y="133"/><use href="#g3" x="234" y="133"/><use href="#gc" x="240" y="133"/><use href="#g1" x="244" y="133"/><use href="#g9" x="250" y="133"/><use href="#g2" x="256" y="133"/><use href="#g3" x="284" y="133"/><use href="#gc" x="290" y="133"/><use href="#g3" x="294" y="133"/><use href="#g8" x="300" y="133"/><use href="#g6" x="306" y="133"/><use href="#g3" x="334" y="133"/><use href="#gc" x="340" y="133"/><use href="#g3" x="344" y="133"/><use href="#g6" x="350" y="133"/><use href="#g0" x="356" y="133"/><use href="#g3" x="384" y="133"/><use href="#gc" x="390" y="133"/><use href="#g2" x="394" y="133"/><use href="#g5" x="400" y="133"/><use href="#g4" x="406" y="133"/><use href="#g3" x="434" y="133"/><use href="#gc" x="440" y="133"/><use href="#g1" x="444" y="133"/><use href="#g5" x="450" y="133"/><use href="#g5" x="456" y="133"/><use href="#g3" x="484" y="133"/><use href="#gc" x="490" y="133"/><use href="#g3" x="494" y="133"/><use href="#g6" x="500" y="133"/><use href="#g9" x="506" y="133"/><use href="#g2" x="534" y="133"/><use href="#gc" x="540" y="133"/><use href="#g4" x="544" y="133"/><use href="#g1" x="550" y="133"/><use href="#g2" x="556" y="133"/><use href="#g2" x="584" y="133"/><use href="#gc" x="590" y="133"/><use href="#g5" x="594" y="133"/><use href="#g2" x="600" y="133"/><use href="#g1" x="606" y="133"/><use href="#g2" x="634" y="133"/><use href="#gc" x="640" y="133"/><use href="#g8" x="644" y="133"/><use href="#g5" x="650" y="133"/><use href="#g5" x="656" y="133"/><use href="#g3" x="684" y="133"/><use href="#gc" x="690" y="133"/><use href="#g1" x="694" y="133"/><use href="#g9" x="700" y="133"/><use href="#g2" x="706" y="133"/><use href="#g2" x="734" y="133"/><use href="#gc" x="740" y="133"/><use href="#g7" x="744" y="133"/><use href="#g3" x="750" y="133"/><use href="#g5" x="756" y="133"/><use href="#g3" x="784" y="133"/><use href="#gc" x="790" y="133"/><use href="#g4" x="794" y="133"/><use href="#g4" x="800" y="133"/><use href="#g5" x="806" y="133"/><use href="#g9" x="839" y="133"/><use href="#gc" x="845" y="133"/><use href="#g3" x="849" y="133"/><use href="#g0" x="855" y="133"/><use href="#g3" x="861" y="133"/><use href="#g2" x="889" y="133"/><use href="#gc" x="895" y="133"/><use href="#g7" x="899" y="133"/><use href="#g0" x="905" y="133"/><use href="#g0" x="911" y="133"/><use href="#g3" x="939" y="133"/><use href="#gc" x="945" y="133"/><use href="#g2" x="949" y="133"/><use href="#g0" x="955" y="133"/><use href="#g0" x="961" y="133"/><use href="#g2" x="10" y="158"/><use href="#g6" x="16" y="158"/><use href="#gs" x="22" y="158"/><use href="#g0" x="28" y="158"/><use href="#g1" x="34" y="158"/><use href="#gs" x="40" y="158"/><use href="#g0" x="46" y="158"/><use href="#g8" x="52" y="158"/><use href="#g2" x="84" y="158"/><use href="#gc" x="90" y="158"/><use href="#g5" x="94" y="158"/><use href="#g1" x="100" y="158"/><use href="#g7" x="106" y="158"/><use href="#g2" x="134" y="158"/><use href="#gc" x="140" y="158"/><use href="#g8" x="144" y="158"/><use href="#g0" x="150" y="158"/><use href="#g3" x="156" y="158"/><use href="#g2" x="184" y="158"/><use href="#gc" x="190" y="158"/><use href="#g9" x="194" y="158"/><use href="#g0" x="200" y="158"/><use href="#g2" x="206" y="158"/><use href="#g3" x="234" y="158"/><use href="#gc" x="240" y="158"/><use href="#g1" x="244" y="158"/><use href="#g6" x="250" y="158"/><use href="#g3" x="256" y="158"/><use href="#g3" x="284" y="158"/><use href="#gc" x="290" y="158"/><use href="#g3" x="294" y="158"/><use href="#g4" x="300" y="158"/><use href="#g1" x="306" y="158"/><use href="#g3" x="334" y="158"/><use href="#gc" x="340" y="158"/><use href="#g3" x="344" y="158"/><use href="#g2" x="350" y="158"/><use href="#g3" x="356" y="158"/><use href="#g3" x="384" y="158"/><use href="#gc" x="390" y="158"/><use href="#g2" x="394" y="158"/><use href="#g2" x="400" y="158"/><use href="#g8" x="406" y="158"/><use href="#g3" x="434" y="158"/><use href="#gc" x="440" y="158"/><use href="#g1" x="444" y="158"/><use href="#g3" x="450" y="158"/><use href="#g2" x="456" y="158"/><use href="#g3" x="484" y="158"/><use href="#gc" x="490" y="158"/><use href="#g3" x="494" y="158"/><use href="#g4" x="500" y="158"/><use href="#g3" x="506" y="158"/><use href="#g2" x="534" y="158"/><use href="#gc" x="540" y="158"/><use href="#g4" x="544" y="158"/><use href="#g0" x="550" y="158"/><use href="#g6" x="556" y="158"/><use href="#g2" x="584" y="158"/><use href="#gc" x="590" y="158"/><use href="#g5" x="594" y="158"/><use href="#g0" x="600" y="158"/><use href="#g6" x="606" y="158"/><use href="#g2" x="634" y="158"/><use href="#gc" x="640" y="158"/><use href="#g8" x="644" y="158"/><use href="#g2" x="650" y="158"/><use href="#g7" x="656" y="158"/><use href="#g3" x="684" y="158"/><use href="#gc" x="690" y="158"/><use href="#g1" x="694" y="158"/><use href="#g6" x="700" y="158"/><use href="#g9" x="706" y="158"/><use href="#g2" x="734" y="158"/><use href="#gc" x="740" y="158"/><use href="#g7" x="744" y="158"/><use href="#g2" x="750" y="158"/><use href="#g9" x="756" y="158"/><use href="#g3" x="784" y="158"/><use href="#gc" x="790" y="158"/><use href="#g4" x="794" y="158"/><use href="#g1" x="800" y="158"/><use href="#g8" x="806" y="158"/><use href="#g9" x="839" y="158"/><use href="#gc" x="845" y="158"/><use href="#g2" x="849" y="158"/><use href="#g8" x="855" y="158"/><use href="#g1" x="861" y="158"/><use href="#g2" x="889" y="158"/><use href="#gc" x="895" y="158"/><use href="#g7" x="899" y="158"/><use href="#g0" x="905" y="158"/><use href="#g0" x="911" y="158"/><use href="#g3" x="939" y="158"/><use href="#gc" x="945" y="158"/><use href="#g2" x="949" y="158"/><use href="#g5" x="955" y="158"/><use href="#g0" x="961" y="158"/><use href="#g2" x="10" y="183"/><use href="#g6" x="16" y="183"/><use href="#gs" x="22" y="183"/><use href="#g0" x="28" y="183"/><use href="#g1" x="34" y="183"/><use href="#gs" x="40" y="183"/><use href="#g0" x="46" y="183"/><use href="#g7" x="52" y="183"/><use href="#g2" x="84" y="183"/><use href="#gc" x="90" y="183"/><use href="#g5" x="94" y="183"/><use href="#g2" x="100" y="183"/><use href="#g3" x="106" y="183"/><use href="#g2" x="134" y="183"/><use href="#gc" x="140" y="183"/><use href="#g8" x="144" y="183"/><use href="#g1" x="150" y="183"/><use href="#g1" x="156" y="183"/><use href="#g2" x="184" y="183"/><use href="#gc" x="190" y="183"/><use href="#g9" x="194" y="183"/><use href="#g1" x="200" y="183"/><use href="#g0" x="206" y="183"/><use href="#g3" x="234" y="183"/><use href="#gc" x="240" y="183"/><use href="#g1" x="244" y="183"/><use href="#g8" x="250" y="183"/><use href="#g5" x="256" y="183"/><use href="#g3" x="284" y="183"/><use href="#gc" x="290" y="183"/><use href="#g3" x="294" y="183"/><use href="#g5" x="300" y="183"/><use href="#g4" x="306" y="183"/><use href="#g3" x="334" y="183"/><use href="#gc" x="340" y="183"/><use href="#g3" x="344" y="183"/><use href="#g2" x="350" y="183"/><use href="#g5" x="356" y="183"/><use href="#g3" x="384" y="183"/><use href="#gc" x="390" y="183"/><use href="#g2" x="394" y="183"/><use href="#g2" x="400" y="183"/><use href="#g4" x="406" y="183"/><use href="#g3" x="434" y="183"/><use href="#gc" x="440" y="183"/><use href="#g1" x="444" y="183"/><use href="#g2" x="450" y="183"/><use href="#g9" x="456" y="183"/><use href="#g3" x="484" y="183"/><use href="#gc" x="490" y="183"/><use href="#g3" x="494" y="183"/><use href="#g6" x="500" y="183"/><use href="#g4" x="506" y="183"/><use href="#g2" x="534" y="183"/><use href="#gc" x="540" y="183"/><use href="#g4" x="544" y="183"/><use href="#g0" x="550" y="183"/><use href="#g6" x="556" y="183"/><use href="#g2" x="584" y="183"/><use href="#gc" x="590" y="183"/><use href="#g5" x="594" y="183"/><use href="#g0" x="600" y="183"/><use href="#g1" x="606" y="183"/><use href="#g2" x="634" y="183"/><use href="#gc" x="640" y="183"/><use href="#g8" x="644" y="183"/><use href="#g2" x="650" y="183"/><use href="#g5" x="656" y="183"/><use href="#g3" x="684" y="183"/><use href="#gc" x="690" y="183"/><use href="#g1" x="694" y="183"/><use href="#g7" x="700" y="183"/><use href="#g5" x="706" y="183"/><use href="#g2" x="734" y="183"/><use href="#gc" x="740" y="183"/><use href="#g7" x="744" y="183"/><use href="#g3" x="750" y="183"/><use href="#g4" x="756" y="183"/><use href="#g3" x="784" y="183"/><use href="#gc" x="790" y="183"/><use href="#g4" x="794" y="183"/><use href="#g2" x="800" y="183"/><use href="#g3" x="806" y="183"/><use href="#g9" x="839" y="183"/><use href="#gc" x="845" y="183"/><use href="#g2" x="849" y="183"/><use href="#g8" x="855" y="183"/><use href="#g6" x="861" y="183"/><use href="#g2" x="889" y="183"/><use href="#gc" x="895" y="183"/><use href="#g7" x="899" y="183"/><use href="#g2" x="905" y="183"/><use href="#g0" x="911" y="183"/><use href="#g3" x="939" y="183"/><use href="#gc" x="945" y="183"/><use href="#g2" x="949" y="183"/><use href="#g5" x="955" y="183"/><use href="#g0" x="961" y="183"/><use href="#g2" x="10" y="208"/><use href="#g6" x="16" y="208"/><use href="#gs" x="22" y="208"/><use href="#g0" x="28" y="208"/><use href="#g1" x="34" y="208"/><use href="#gs" x="40" y="208"/><use href="#g0" x="46" y="208"/><use href="#g6" x="52" y="208"/><use href="#g2" x="84" y="208"/><use href="#gc" x="90" y="208"/><use href="#g5" x="94" y="208"/><use href="#g4" x="100" y="208"/><use href="#g5" x="106" y="208"/><use href="#g2" x="134" y="208"/><use href="#gc" x="140" y="208"/><use href="#g8" x="144" y="208"/><use href="#g2" x="150" y="208"/><use href="#g9" x="156" y="208"/><use href="#g2" x="184" y="208"/><use href="#gc" x="190" y="208"/><use href="#g9" x="194" y="208"/><use href="#g4" x="200" y="208"/><use href="#g8" x="206" y="208"/><use href="#g3" x="234" y="208"/><use href="#gc" x="240" y="208"/><use href="#g2" x="244" y="208"/><use href="#g4" x="250" y="208"/><use href="#g4" x="256" y="208"/><use href="#g3" x="284" y="208"/><use href="#gc" x="290" y="208"/><use href="#g3" x="294" y="208"/><use href="#g9" x="300" y="208"/><use href="#g8" x="306" y="208"/><use href="#g3" x="334" y="208"/><use href="#gc" x="340" y="208"/><use href="#g3" x="344" y="208"/><use href="#g5" x="350" y="208"/><use href="#g9" x="356" y="208"/><use href="#g3" x="384" y="208"/><use href="#gc" x="390" y="208"/><use href="#g2" x="394" y="208"/><use href="#g4" x="400" y="208"/><use href="#g8" x="406" y="208"/><use href="#g3" x="434" y="208"/><use href="#gc" x="440" y="208"/><use href="#g1" x="444" y="208"/><use href="#g5" x="450" y="208"/><use href="#g1" x="456" y="208"/><use href="#g3" x="484" y="208"/><use href="#gc" x="490" y="208"/><use href="#g4" x="494" y="208"/><use href="#g1" x="500" y="208"/><use href="#g0" x="506" y="208"/><use href="#g2" x="534" y="208"/><use href="#gc" x="540" y="208"/><use href="#g4" x="544" y="208"/><use href="#g1" x="550" y="208"/><use href="#g6" x="556" y="208"/><use href="#g2" x="584" y="208"/><use href="#gc" x="590" y="208"/><use href="#g5" x="594" y="208"/><use href="#g1" x="600" y="208"/><use href="#g9" x="606" y="208"/><use href="#g2" x="634" y="208"/><use href="#gc" x="640" y="208"/><use href="#g8" x="644" y="208"/><use href="#g5" x="650" y="208"/><use href="#g7" x="656" y="208"/><use href="#g3" x="684" y="208"/><use href="#gc" x="690" y="208"/><use href="#g2" x="694" y="208"/><use href="#g0" x="700" y="208"/><use href="#g8" x="706" y="208"/><use href="#g2" x="734" y="208"/><use href="#gc" x="740" y="208"/><use href="#g7" x="744" y="208"/><use href="#g6" x="750" y="208"/><use href="#g3" x="756" y="208"/><use href="#g3" x="784" y="208"/><use href="#gc" x="790" y="208"/><use href="#g4" x="794" y="208"/><use href="#g6" x="800" y="208"/><use href="#g0" x="806" y="208"/><use href="#g9" x="839" y="208"/><use href="#gc" x="845" y="208"/><use href="#g3" x="849" y="208"/><use href="#g1" x="855" y="208"/><use href="#g3" x="861" y="208"/><use href="#g2" x="889" y="208"/><use href="#gc" x="895" y="208"/><use href="#g7" x="899" y="208"/><use href="#g5" x="905" y="208"/><use href="#g0" x="911" y="208"/><use href="#g3" x="939" y="208"/><use href="#gc" x="945" y="208"/><use href="#g2" x="949" y="208"/><use href="#g6" x="955" y="208"/><use href="#g0" x="961" y="208"/><use href="#g2" x="10" y="233"/><use href="#g6" x="16" y="233"/><use href="#gs" x="22" y="233"/><use href="#g0" x="28" y="233"/><use href="#g1" x="34" y="233"/><use href="#gs" x="40" y="233"/><use href="#g0" x="46" y="233"/><use href="#g5" x="52" y="233"/><use href="#g2" x="84" y="233"/><use href="#gc" x="90" y="233"/><use href="#g5" x="94" y="233"/><use href="#g5" x="100" y="233"/><use href="#g2" x="106" y="233"/><use href="#g2" x="134" y="233"/><use href="#gc" x="140" y="233"/><use href="#g8" x="144" y="233"/><use href="#g3" x="150" y="233"/><use href="#g1" x="156" y="233"/><use href="#g2" x="184" y="233"/><use href="#gc" x="190" y="233"/><use href="#g9" x="194" y="233"/><use href="#g3" x="200" y="233"/><use href="#g3" x="206" y="233"/><use href="#g3" x="234" y="233"/><use href="#gc" x="240" y="233"/><use href="#g2" x="244" y="233"/><use href="#g4" x="250" y="233"/><use href="#g9" x="256" y="233"/><use href="#g3" x="284" y="233"/><use href="#gc" x="290" y="233"/><use href="#g3" x="294" y="233"/><use href="#g9" x="300" y="233"/><use href="#g6" x="306" y="233"/><use href="#g3" x="334" y="233"/><use href="#gc" x="340" y="233"/><use href="#g3" x="344" y="233"/><use href="#g7" x="350" y="233"/><use href="#g3" x="356" y="233"/><use href="#g3" x="384" y="233"/><use href="#gc" x="390" y="233"/><use href="#g2" x="394" y="233"/><use href="#g7" x="400" y="233"/><use href="#g4" x="406" y="233"/><use href="#g3" x="434" y="233"/><use href="#gc" x="440" y="233"/><use href="#g1" x="444" y="233"/><use href="#g7" x="450" y="233"/><use href="#g3" x="456" y="233"/><use href="#g3" x="484" y="233"/><use href="#gc" x="490" y="233"/><use href="#g4" x="494" y="233"/><use href="#g0" x="500" y="233"/><use href="#g8" x="506" y="233"/><use href="#g2" x="534" y="233"/><use href="#gc" x="540" y="233"/><use href="#g4" x="544" y="233"/><use href="#g1" x="550" y="233"/><use href="#g5" x="556" y="233"/><use href="#g2" x="584" y="233"/><use href="#gc" x="590" y="233"/><use href="#g5" x="594" y="233"/><use href="#g1" x="600" y="233"/><use href="#g8" x="606" y="233"/><use href="#g2" x="634" y="233"/><use href="#gc" x="640" y="233"/><use href="#g8" x="644" y="233"/><use href="#g4" x="650" y="233"/><use href="#g2" x="656" y="233"/><use href="#g3" x="684" y="233"/><use href="#gc" x="690" y="233"/><use href="#g1" x="694" y="233"/><use href="#g9" x="700" y="233"/><use href="#g9" x="706" y="233"/><use href="#g2" x="734" y="233"/><use href="#gc" x="740" y="233"/><use href="#g7" x="744" y="233"/><use href="#g7" x="750" y="233"/><use href="#g3" x="756" y="233"/><use href="#g3" x="784" y="233"/><use href="#gc" x="790" y="233"/><use href="#g4" x="794" y="233"/><use href="#g5" x="800" y="233"/><use href="#g7" x="806" y="233"/><use href="#g9" x="839" y="233"/><use href="#gc" x="845" y="233"/><use href="#g3" x="849" y="233"/><use href="#g0" x="855" y="233"/><use href="#g8" x="861" y="233"/><use href="#g2" x="889" y="233"/><use href="#gc" x="895" y="233"/><use href="#g7" x="899" y="233"/><use href="#g6" x="905" y="233"/><use href="#g0" x="911" y="233"/><use href="#g3" x="939" y="233"/><use href="#gc" x="945" y="233"/><use href="#g2" x="949" y="233"/><use href="#g7" x="955" y="233"/><use href="#g0" x="961" y="233"/><use href="#g2" x="10" y="258"/><use href="#g6" x="16" y="258"/><use href="#gs" x="22" y="258"/><use href="#g0" x="28" y="258"/><use href="#g1" x="34" y="258"/><use href="#gs" x="40" y="258"/><use href="#g0" x="46" y="258"/><use href="#g2" x="52" y="258"/><use href="#g2" x="84" y="258"/><use href="#gc" x="90" y="258"/><use href="#g5" x="94" y="258"/><use href="#g5" x="100" y="258"/><use href="#g1" x="106" y="258"/><use href="#g2" x="134" y="258"/><use href="#gc" x="140" y="258"/><use href="#g7" x="144" y="258"/><use href="#g9" x="150" y="258"/><use href="#g2" x="156" y="258"/><use href="#g2" x="184" y="258"/><use href="#gc" x="190" y="258"/><use href="#g9" x="194" y="258"/><use href="#g3" x="200" y="258"/><use href="#g5" x="206" y="258"/><use href="#g3" x="234" y="258"/><use href="#gc" x="240" y="258"/><use href="#g2" x="244" y="258"/><use href="#g3" x="250" y="258"/><use href="#g9" x="256" y="258"/><use href="#g3" x="284" y="258"/><use href="#gc" x="290" y="258"/><use href="#g3" x="294" y="258"/><use href="#g8" x="300" y="258"/><use href="#g6" x="306" y="258"/><use href="#g3" x="334" y="258"/><use href="#gc" x="340" y="258"/><use href="#g3" x="344" y="258"/><use href="#g5" x="350" y="258"/><use href="#g3" x="356" y="258"/><use href="#g3" x="384" y="258"/><use href="#gc" x="390" y="258"/><use href="#g2" x="394" y="258"/><use href="#g5" x="400" y="258"/><use href="#g5" x="406" y="258"/><use href="#g3" x="434" y="258"/><use href="#gc" x="440" y="258"/><use href="#g1" x="444" y="258"/><use href="#g5" x="450" y="258"/><use href="#g6" x="456" y="258"/><use href="#g3" x="484" y="258"/><use href="#gc" x="490" y="258"/><use href="#g3" x="494" y="258"/><use href="#g9" x="500" y="258"/><use href="#g4" x="506" y="258"/><use href="#g2" x="534" y="258"/><use href="#gc" x="540" y="258"/><use href="#g4" x="544" y="258"/><use href="#g0" x="550" y="258"/><use href="#g1" x="556" y="258"/><use href="#g2" x="584" y="258"/><use href="#gc" x="590" y="258"/><use href="#g5" x="594" y="258"/><use href="#g0" x="600" y="258"/><use href="#g7" x="606" y="258"/><use href="#g2" x="634" y="258"/><use href="#gc" x="640" y="258"/><use href="#g8" x="644" y="258"/><use href="#g2" x="650" y="258"/><use href="#g6" x="656" y="258"/><use href="#g3" x="684" y="258"/><use href="#gc" x="690" y="258"/><use href="#g1" x="694" y="258"/><use href="#g9" x="700" y="258"/><use href="#g5" x="706" y="258"/><use href="#g2" x="734" y="258"/><use href="#gc" x="740" y="258"/><use href="#g7" x="744" y="258"/><use href="#g8" x="750" y="258"/><use href="#g5" x="756" y="258"/><use href="#g3" x="784" y="258"/><use href="#gc" x="790" y="258"/><use href="#g4" x="794" y="258"/><use href="#g5" x="800" y="258"/><use href="#g9" x="806" y="258"/><use href="#g9" x="839" y="258"/><use href="#gc" x="845" y="258"/><use href="#g3" x="849" y="258"/><use href="#g0" x="855" y="258"/><use href="#g3" x="861" y="258"/><use href="#g2" x="889" y="258"/><use href="#gc" x="895" y="258"/><use href="#g7" x="899" y="258"/><use href="#g7" x="905" y="258"/><use href="#g0" x="911" y="258"/><use href="#g3" x="939" y="258"/><use href="#gc" x="945" y="258"/><use href="#g2" x="949" y="258"/><use href="#g7" x="955" y="258"/><use href="#g0" x="961" y="258"/><use href="#g1" x="27" y="573"/><use href="#g2" x="33" y="573"/><use href="#g1" x="103" y="573"/><use href="#g2" x="109" y="573"/><use href="#gs" x="115" y="573"/><use href="#g2" x="121" y="573"/><use href="#g9" x="127" y="573"/><use href="#g2" x="216" y="573"/><use href="#g0" x="222" y="573"/><use href="#g2" x="228" y="573"/><use href="#g6" x="234" y="573"/><use href="#g0" x="254" y="573"/><use href="#g1" x="260" y="573"/><use href="#gs" x="266" y="573"/><use href="#g0" x="272" y="573"/><use href="#g5" x="278" y="573"/><use href="#g0" x="329" y="573"/><use href="#g1" x="335" y="573"/><use href="#gs" x="341" y="573"/><use href="#g0" x="347" y="573"/><use href="#g7" x="353" y="573"/><use href="#g0" x="404" y="573"/><use href="#g1" x="410" y="573"/><use href="#gs" x="416" y="573"/><use href="#g0" x="422" y="573"/><use href="#g9" x="428" y="573"/><use href="#g0" x="480" y="573"/><use href="#g1" x="486" y="573"/><use href="#gs" x="492" y="573"/><use href="#g1" x="498" y="573"/><use href="#g3" x="504" y="573"/><g clip-path="url(#cc)"><use href="#g0" x="535" y="573"/></g><use href="#h0" x="5" y="292" fill="#e00000"/><use href="#h1" x="17" y="292" fill="#e00000"/><use href="#g3" x="29" y="292" fill="#e00000"/><use href="#gY" x="35" y="292" fill="#e00000"/><use href="#h0" x="47" y="292" fill="#ff00ff"/><use href="#h1" x="59" y="292" fill="#ff00ff"/><use href="#g5" x="71" y="292" fill="#ff00ff"/><use href="#gY" x="77" y="292" fill="#ff00ff"/><use href="#h0" x="89" y="292" fill="#10107e"/><use href="#h1" x="101" y="292" fill="#10107e"/><use href="#g1" x="113" y="292" fill="#10107e"/><use href="#g0" x="119" y="292" fill="#10107e"/><use href="#gY" x="125" y="292" fill="#10107e"/><use href="#h10" x="137" y="292" fill="#6ed21e"/><use href="#h11" x="149" y="292" fill="#6ed21e"/><use href="#gA" x="161" y="292" fill="#6ed21e"/><use href="#gA" x="169" y="292" fill="#6ed21e"/><use href="#gm" x="177" y="292" fill="#6ed21e"/><use href="#h0" x="564" y="294" fill="#fff"/><use href="#h1" x="576" y="294" fill="#fff"/><use href="#g5" x="588" y="294" fill="#fff"/><use href="#gY" x="594" y="294" fill="#fff"/><use href="#g1" x="652" y="294" fill="#fff"/><use href="#g1" x="658" y="294" fill="#fff"/><use href="#h12" x="663" y="294" fill="#fff"/><use href="#g3" x="676" y="294" fill="#fff"/><use href="#g0" x="682" y="294" fill="#fff"/><use href="#h13" x="687" y="294" fill="#fff"/><use href="#g1" x="737" y="294" fill="#fff"/><use href="#g6" x="743" y="294" fill="#fff"/><use href="#h12" x="748" y="294" fill="#fff"/><use href="#g0" x="761" y="294" fill="#fff"/><use href="#g0" x="767" y="294" fill="#fff"/><use href="#h13" x="772" y="294" fill="#fff"/><use href="#h7" x="833" y="294" fill="#fff"/><use href="#h14" x="845" y="294" fill="#fff"/><use href="#h7" x="905" y="294" fill="#fff"/><use href="#h14" x="917" y="294" fill="#fff"/><use href="#h15" x="929" y="294" fill="#fff"/><use href="#h16" x="941" y="294" fill="#fff"/><use href="#g2" x="566" y="318"/><use href="#g6" x="572" y="318"/><use href="#gs" x="578" y="318"/><use href="#g0" x="584" y="318"/><use href="#g1" x="590" y="318"/><use href="#gs" x="596" y="318"/><use href="#g1" x="602" y="318"/><use href="#g3" x="608" y="318"/><use href="#g3" x="683" y="318"/><use href="#gc" x="689" y="318"/><use href="#g2" x="693" y="318"/><use href="#g2" x="699" y="318"/><use href="#g6" x="705" y="318"/><use href="#g3" x="768" y="318"/><use href="#gc" x="774" y="318"/><use href="#g2" x="778" y="318"/><use href="#g4" x="784" y="318"/><use href="#g2" x="790" y="318"/><use href="#g3" x="852" y="318"/><use href="#gc" x="858" y="318"/><use href="#g2" x="862" y="318"/><use href="#g1" x="868" y="318"/><use href="#g2" x="874" y="318"/><use href="#g0" x="939" y="318" fill="#e00000"/><use href="#gc" x="945" y="318" fill="#e00000"/><use href="#g0" x="949" y="318" fill="#e00000"/><use href="#g3" x="955" y="318" fill="#e00000"/><use href="#g0" x="961" y="318" fill="#e00000"/><use href="#g2" x="566" y="342"/><use href="#g6" x="572" y="342"/><use href="#gs" x="578" y="342"/><use href="#g0" x="584" y="342"/><use href="#g1" x="590" y="342"/><use href="#gs" x="596" y="342"/><use href="#g1" x="602" y="342"/><use href="#g2" x="608" y="342"/><use href="#g3" x="683" y="342"/><use href="#gc" x="689" y="342"/><use href="#g1" x="693" y="342"/><use href="#g8" x="699" y="342"/><use href="#g8" x="705" y="342"/><use href="#g3" x="768" y="342"/><use href="#gc" x="774" y="342"/><use href="#g2" x="778" y="342"/><use href="#g1" x="784" y="342"/><use href="#g2" x="790" y="342"/><use href="#g3" x="852" y="342"/><use href="#gc" x="858" y="342"/><use href="#g1" x="862" y="342"/><use href="#g9" x="868" y="342"/><use href="#g2" x="874" y="342"/><use href="#g0" x="939" y="342" fill="#e00000"/><use href="#gc" x="945" y="342" fill="#e00000"/><use href="#g0" x="949" y="342" fill="#e00000"/><use href="#g2" x="955" y="342" fill="#e00000"/><use href="#g0" x="961" y="342" fill="#e00000"/><use href="#g2" x="566" y="367"/><use href="#g6" x="572" y="367"/><use href="#gs" x="578" y="367"/><use href="#g0" x="584" y="367"/><use href="#g1" x="590" y="367"/><use href="#gs" x="596" y="367"/><use href="#g0" x="602" y="367"/><use href="#g9" x="608" y="367"/><use href="#g3" x="683" y="367"/><use href="#gc" x="689" y="367"/><use href="#g1" x="693" y="367"/><use href="#g8" x="699" y="367"/><use href="#g2" x="705" y="367"/><use href="#g3" x="768" y="367"/><use href="#gc" x="774" y="367"/><use href="#g1" x="778" y="367"/><use href="#g9" x="784" y="367"/><use href="#g2" x="790" y="367"/><use href="#g3" x="852" y="367"/><use href="#gc" x="858" y="367"/><use href="#g1" x="862" y="367"/><use href="#g6" x="868" y="367"/><use href="#g3" x="874" y="367"/><use href="#g0" x="939" y="367" fill="#e00000"/><use href="#gc" x="945" y="367" fill="#e00000"/><use href="#g0" x="949" y="367" fill="#e00000"/><use href="#g2" x="955" y="367" fill="#e00000"/><use href="#g9" x="961" y="367" fill="#e00000"/><use href="#g2" x="566" y="392"/><use href="#g6" x="572" y="392"/><use href="#gs" x="578" y="392"/><use href="#g0" x="584" y="392"/><use href="#g1" x="590" y="392"/><use href="#gs" x="596" y="392"/><use href="#g0" x="602" y="392"/><use href="#g8" x="608" y="392"/><use href="#g3" x="683" y="392"/><use href="#gc" x="689" y="392"/><use href="#g1" x="693" y="392"/><use href="#g8" x="699" y="392"/><use href="#g6" x="705" y="392"/><use href="#g3" x="768" y="392"/><use href="#gc" x="774" y="392"/><use href="#g1" x="778" y="392"/><use href="#g6" x="784" y="392"/><use href="#g3" x="790" y="392"/><use href="#g3" x="852" y="392"/><use href="#gc" x="858" y="392"/><use href="#g1" x="862" y="392"/><use href="#g8" x="868" y="392"/><use href="#g5" x="874" y="392"/><use href="#gm" x="933" y="392" fill="#0000d8"/><use href="#g0" x="939" y="392" fill="#0000d8"/><use href="#gc" x="945" y="392" fill="#0000d8"/><use href="#g0" x="949" y="392" fill="#0000d8"/><use href="#g2" x="955" y="392" fill="#0000d8"/><use href="#g2" x="961" y="392" fill="#0000d8"/><use href="#g2" x="566" y="417"/><use href="#g6" x="572" y="417"/><use href="#gs" x="578" y="417"/><use href="#g0" x="584" y="417"/><use href="#g1" x="590" y="417"/><use href="#gs" x="596" y="417"/><use href="#g0" x="602" y="417"/><use href="#g7" x="608" y="417"/><use href="#g3" x="683" y="417"/><use href="#gc" x="689" y="417"/><use href="#g2" x="693" y="417"/><use href="#g0" x="699" y="417"/><use href="#g6" x="705" y="417"/><use href="#g3" x="768" y="417"/><use href="#gc" x="774" y="417"/><use href="#g1" x="778" y="417"/><use href="#g8" x="784" y="417"/><use href="#g5" x="790" y="417"/><use href="#g3" x="852" y="417"/><use href="#gc" x="858" y="417"/><use href="#g2" x="862" y="417"/><use href="#g4" x="868" y="417"/><use href="#g4" x="874" y="417"/><use href="#gm" x="933" y="417" fill="#0000d8"/><use href="#g0" x="939" y="417" fill="#0000d8"/><use href="#gc" x="945" y="417" fill="#0000d8"/><use href="#g0" x="949" y="417" fill="#0000d8"/><use href="#g5" x="955" y="417" fill="#0000d8"/><use href="#g9" x="961" y="417" fill="#0000d8"/><use href="#g2" x="566" y="442"/><use href="#g6" x="572" y="442"/><use href="#gs" x="578" y="442"/><use href="#g0" x="584" y="442"/><use href="#g1" x="590" y="442"/><use href="#gs" x="596" y="442"/><use href="#g0" x="602" y="442"/><use href="#g6" x="608" y="442"/><use href="#g3" x="683" y="442"/><use href="#gc" x="689" y="442"/><use href="#g2" x="693" y="442"/><use href="#g4" x="699" y="442"/><use href="#g0" x="705" y="442"/><use href="#g3" x="768" y="442"/><use href="#gc" x="774" y="442"/><use href="#g2" x="778" y="442"/><use href="#g4" x="784" y="442"/><use href="#g4" x="790" y="442"/><use href="#g3" x="852" y="442"/><use href="#gc" x="858" y="442"/><use href="#g2" x="862" y="442"/><use href="#g4" x="868" y="442"/><use href="#g9" x="874" y="442"/><use href="#gm" x="933" y="442" fill="#0000d8"/><use href="#g0" x="939" y="442" fill="#0000d8"/><use href="#gc" x="945" y="442" fill="#0000d8"/><use href="#g0" x="949" y="442" fill="#0000d8"/><use href="#g0" x="955" y="442" fill="#0000d8"/><use href="#g5" x="961" y="442" fill="#0000d8"/><use href="#g2" x="566" y="467"/><use href="#g6" x="572" y="467"/><use href="#gs" x="578" y="467"/><use href="#g0" x="584" y="467"/><use href="#g1" x="590" y="467"/><use href="#gs" x="596" y="467"/><use href="#g0" x="602" y="467"/><use href="#g5" x="608" y="467"/><use href="#g3" x="683" y="467"/><use href="#gc" x="689" y="467"/><use href="#g2" x="693" y="467"/><use href="#g6" x="699" y="467"/><use href="#g7" x="705" y="467"/><use href="#g3" x="768" y="467"/><use href="#gc" x="774" y="467"/><use href="#g2" x="778" y="467"/><use href="#g4" x="784" y="467"/><use href="#g9" x="790" y="467"/><use href="#g3" x="852" y="467"/><use href="#gc" x="858" y="467"/><use href="#g2" x="862" y="467"/><use href="#g3" x="868" y="467"/><use href="#g9" x="874" y="467"/><use href="#g0" x="939" y="467" fill="#e00000"/><use href="#gc" x="945" y="467" fill="#e00000"/><use href="#g0" x="949" y="467" fill="#e00000"/><use href="#g1" x="955" y="467" fill="#e00000"/><use href="#g0" x="961" y="467" fill="#e00000"/><use href="#g2" x="566" y="492"/><use href="#g6" x="572" y="492"/><use href="#gs" x="578" y="492"/><use href="#g0" x="584" y="492"/><use href="#g1" x="590" y="492"/><use href="#gs" x="596" y="492"/><use href="#g0" x="602" y="492"/><use href="#g2" x="608" y="492"/><use href="#g3" x="683" y="492"/><use href="#gc" x="689" y="492"/><use href="#g2" x="693" y="492"/><use href="#g3" x="699" y="492"/><use href="#g7" x="705" y="492"/><use href="#g3" x="768" y="492"/><use href="#gc" x="774" y="492"/><use href="#g2" x="778" y="492"/><use href="#g3" x="784" y="492"/><use href="#g9" x="790" y="492"/><use href="#g3" x="852" y="492"/><use href="#gc" x="858" y="492"/><use href="#g2" x="862" y="492"/><use href="#g4" x="868" y="492"/><use href="#g0" x="874" y="492"/><use href="#gm" x="933" y="492" fill="#0000d8"/><use href="#g0" x="939" y="492" fill="#0000d8"/><use href="#gc" x="945" y="492" fill="#0000d8"/><use href="#g0" x="949" y="492" fill="#0000d8"/><use href="#g0" x="955" y="492" fill="#0000d8"/><use href="#g1" x="961" y="492" fill="#0000d8"/><use href="#g2" x="566" y="517"/><use href="#g5" x="572" y="517"/><use href="#gs" x="578" y="517"/><use href="#g1" x="584" y="517"/><use href="#g2" x="590" y="517"/><use href="#gs" x="596" y="517"/><use href="#g3" x="602" y="517"/><use href="#g1" x="608" y="517"/><use href="#g3" x="683" y="517"/><use href="#gc" x="689" y="517"/><use href="#g2" x="693" y="517"/><use href="#g4" x="699" y="517"/><use href="#g0" x="705" y="517"/><use href="#g3" x="768" y="517"/><use href="#gc" x="774" y="517"/><use href="#g2" x="778" y="517"/><use href="#g4" x="784" y="517"/><use href="#g0" x="790" y="517"/><use href="#g3" x="852" y="517"/><use href="#gc" x="858" y="517"/><use href="#g2" x="862" y="517"/><use href="#g4" x="868" y="517"/><use href="#g0" x="874" y="517"/><use href="#gm" x="961" y="517"/><use href="#g2" x="566" y="542"/><use href="#g5" x="572" y="542"/><use href="#gs" x="578" y="542"/><use href="#g1" x="584" y="542"/><use href="#g2" x="590" y="542"/><use href="#gs" x="596" y="542"/><use href="#g3" x="602" y="542"/><use href="#g0" x="608" y="542"/><use href="#g3" x="683" y="542"/><use href="#gc" x="689" y="542"/><use href="#g2" x="693" y="542"/><use href="#g2" x="699" y="542"/><use href="#g4" x="705" y="542"/><use href="#g3" x="768" y="542"/><use href="#gc" x="774" y="542"/><use href="#g2" x="778" y="542"/><use href="#g4" x="784" y="542"/><use href="#g0" x="790" y="542"/><use href="#g3" x="852" y="542"/><use href="#gc" x="858" y="542"/><use href="#g2" x="862" y="542"/><use href="#g2" x="868" y="542"/><use href="#g6" x="874" y="542"/><use href="#g0" x="939" y="542" fill="#e00000"/><use href="#gc" x="945" y="542" fill="#e00000"/><use href="#g0" x="949" y="542" fill="#e00000"/><use href="#g1" x="955" y="542" fill="#e00000"/><use href="#g4" x="961" y="542" fill="#e00000"/><use href="#g2" x="566" y="567"/><use href="#g5" x="572" y="567"/><use href="#gs" x="578" y="567"/><use href="#g1" x="584" y="567"/><use href="#g2" x="590" y="567"/><use href="#gs" x="596" y="567"/><use href="#g2" x="602" y="567"/><use href="#g9" x="608" y="567"/><use href="#g3" x="683" y="567"/><use href="#gc" x="689" y="567"/><use href="#g2" x="693" y="567"/><use href="#g0" x="699" y="567"/><use href="#g6" x="705" y="567"/><use href="#g3" x="768" y="567"/><use href="#gc" x="774" y="567"/><use href="#g2" x="778" y="567"/><use href="#g2" x="784" y="567"/><use href="#g6" x="790" y="567"/><use href="#g3" x="852" y="567"/><use href="#gc" x="858" y="567"/><use href="#g2" x="862" y="567"/><use href="#g4" x="868" y="567"/><use href="#g0" x="874" y="567"/><use href="#gm" x="933" y="567" fill="#0000d8"/><use href="#g0" x="939" y="567" fill="#0000d8"/><use href="#gc" x="945" y="567" fill="#0000d8"/><use href="#g0" x="949" y="567" fill="#0000d8"/><use href="#g1" x="955" y="567" fill="#0000d8"/><use href="#g4" x="961" y="567" fill="#0000d8"/></svg>

</body></html>
